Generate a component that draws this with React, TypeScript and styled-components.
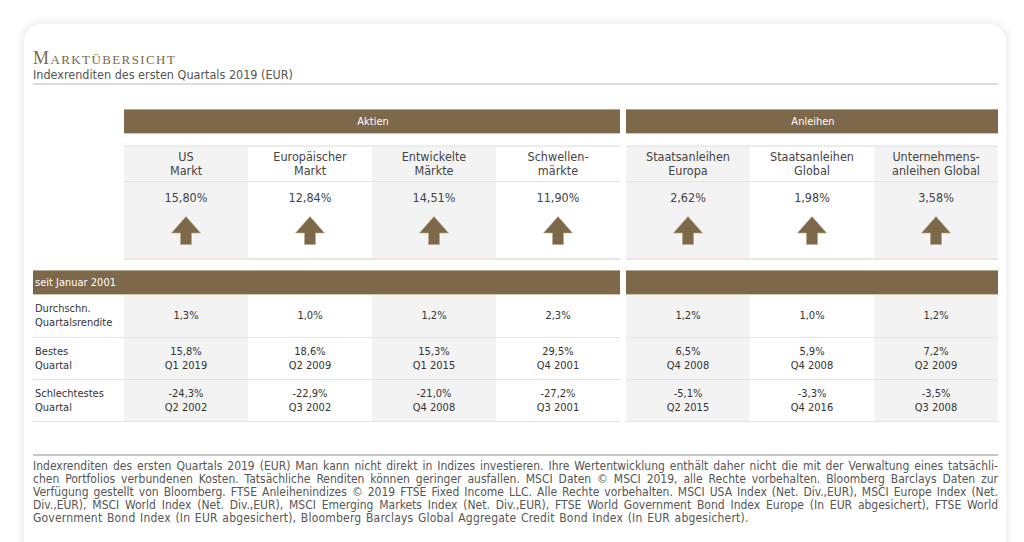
import React from "react";
import styled, { createGlobalStyle } from "styled-components";

const BROWN = "#7d6849";
const SANS = `"DejaVu Sans Condensed", "DejaVu Sans", sans-serif`;

const GlobalStyle = createGlobalStyle`
  html, body { margin: 0; padding: 0; background: #fff; }
  body { font-family: ${SANS}; color: #444; overflow: hidden; }
`;

const Page = styled.div`
  padding: 24px 18px 0 24px;
  height: 542px;
  box-sizing: border-box;
  overflow: hidden;
`;

const Card = styled.div`
  background: #fff;
  border-radius: 18px 18px 0 0;
  box-shadow: 0 0 6px 4px rgba(0, 0, 0, 0.06);
  padding: 25px 8px 0 9px;
  height: 560px;
  box-sizing: border-box;
`;

const Title = styled.h1`
  margin: 0;
  font-family: "Liberation Serif", serif;
  font-weight: normal;
  font-variant: small-caps;
  font-size: 18px;
  line-height: 18px;
  letter-spacing: 1.4px;
  color: ${BROWN};
`;

const Subtitle = styled.div`
  font-size: 12.5px;
  line-height: 15px;
  color: #555;
  padding-bottom: 1px;
  border-bottom: 2px solid #dcdcdc;
`;

const Grid = styled.div`
  display: grid;
  grid-template-columns: 91px repeat(4, 124px) 6px repeat(3, 124px);
  margin-top: 24px;
`;

const Blank = styled.div<{ $span?: number }>`
  grid-column: span ${(p) => p.$span ?? 1};
`;

const Spacer = styled.div<{ $h: number }>`
  grid-column: 1 / -1;
  height: ${(p) => p.$h}px;
`;

const GroupBar = styled.div<{ $span: number; $align?: string }>`
  grid-column: span ${(p) => p.$span};
  height: 25px;
  box-sizing: border-box;
  background: ${BROWN};
  border-top: 1px solid #b3a68f;
  border-bottom: 1px solid #cfc4b1;
  color: #fff;
  font-size: 11px;
  display: flex;
  align-items: center;
  justify-content: ${(p) => p.$align ?? "center"};
  padding-left: 2px;
`;

const HeadCell = styled.div<{ $shade: boolean }>`
  background: ${(p) => (p.$shade ? "#f3f3f3" : "#fff")};
  border-top: 2px solid #ececec;
  border-bottom: 1px solid #e3e3e3;
  height: 37px;
  box-sizing: border-box;
  display: flex;
  flex-direction: column;
  align-items: center;
  justify-content: center;
  text-align: center;
  font-size: 12.5px;
  line-height: 14px;
  color: #444;
`;

const ValueCell = styled.div<{ $shade: boolean }>`
  background: ${(p) => (p.$shade ? "#f3f3f3" : "#fff")};
  border-bottom: 2px solid #e6e6e6;
  height: 78px;
  box-sizing: border-box;
  display: flex;
  flex-direction: column;
  align-items: center;
  padding-top: 9px;
  font-size: 12.5px;
  line-height: 14px;
  color: #444;
`;

const ArrowWrap = styled.div`
  margin-top: 11px;
  width: 30px;
  height: 29px;
`;

const RowLabel = styled.div<{ $h: number }>`
  height: ${(p) => p.$h}px;
  box-sizing: border-box;
  border-bottom: 1px solid #e3e3e3;
  display: flex;
  flex-direction: column;
  justify-content: center;
  padding-left: 2px;
  font-size: 11px;
  line-height: 14px;
  color: #333;
`;

const DataCell = styled.div<{ $shade: boolean; $h: number }>`
  height: ${(p) => p.$h}px;
  box-sizing: border-box;
  background: ${(p) => (p.$shade ? "#f3f3f3" : "#fff")};
  border-bottom: 1px solid #e3e3e3;
  display: flex;
  flex-direction: column;
  align-items: center;
  justify-content: center;
  font-size: 11px;
  line-height: 14px;
  color: #333;
`;

const Footer = styled.div`
  margin-top: 32px;
  border-top: 2px solid #c8c8c8;
  padding-top: 4px;
  font-size: 12px;
  line-height: 13px;
  color: #555;
`;

const FooterLine = styled.div<{ $last?: boolean }>`
  text-align: justify;
  text-align-last: ${(p) => (p.$last ? "left" : "justify")};
  word-spacing: ${(p) => (p.$last ? "1px" : "-1px")};
  letter-spacing: ${(p) => (p.$last ? "0.2px" : "0")};
  white-space: nowrap;
`;

type Col = {
  name: [string, string];
  ret: string;
  avg: string;
  best: [string, string];
  worst: [string, string];
};

const stocks: Col[] = [
  { name: ["US", "Markt"], ret: "15,80%", avg: "1,3%", best: ["15,8%", "Q1 2019"], worst: ["-24,3%", "Q2 2002"] },
  { name: ["Europäischer", "Markt"], ret: "12,84%", avg: "1,0%", best: ["18,6%", "Q2 2009"], worst: ["-22,9%", "Q3 2002"] },
  { name: ["Entwickelte", "Märkte"], ret: "14,51%", avg: "1,2%", best: ["15,3%", "Q1 2015"], worst: ["-21,0%", "Q4 2008"] },
  { name: ["Schwellen-", "märkte"], ret: "11,90%", avg: "2,3%", best: ["29,5%", "Q4 2001"], worst: ["-27,2%", "Q3 2001"] },
];

const bonds: Col[] = [
  { name: ["Staatsanleihen", "Europa"], ret: "2,62%", avg: "1,2%", best: ["6,5%", "Q4 2008"], worst: ["-5,1%", "Q2 2015"] },
  { name: ["Staatsanleihen", "Global"], ret: "1,98%", avg: "1,0%", best: ["5,9%", "Q4 2008"], worst: ["-3,3%", "Q4 2016"] },
  { name: ["Unternehmens-", "anleihen Global"], ret: "3,58%", avg: "1,2%", best: ["7,2%", "Q2 2009"], worst: ["-3,5%", "Q3 2008"] },
];

const Arrow = () => (
  <ArrowWrap>
    <svg width="30" height="29" viewBox="0 0 30 29">
      <polygon
        points="15,0.5 29.5,17 20.5,17 20.5,28.5 9.5,28.5 9.5,17 0.5,17"
        fill={BROWN}
        stroke="#b8aa90"
        strokeWidth="0.6"
      />
    </svg>
  </ArrowWrap>
);

const shadeOf = (i: number) => i % 2 === 0;

const rows: { label: [string, string]; h: number; get: (c: Col) => string[] }[] = [
  { label: ["Durchschn.", "Quartalsrendite"], h: 43, get: (c) => [c.avg] },
  { label: ["Bestes", "Quartal"], h: 42, get: (c) => c.best },
  { label: ["Schlechtestes", "Quartal"], h: 42, get: (c) => c.worst },
];

const footerLines = [
  "Indexrenditen des ersten Quartals 2019 (EUR) Man kann nicht direkt in Indizes investieren. Ihre Wertentwicklung enthält daher nicht die mit der Verwaltung eines tatsächli-",
  "chen Portfolios verbundenen Kosten. Tatsächliche Renditen können geringer ausfallen. MSCI Daten © MSCI 2019, alle Rechte vorbehalten. Bloomberg Barclays Daten zur",
  "Verfügung gestellt von Bloomberg. FTSE Anleihenindizes © 2019 FTSE Fixed Income LLC. Alle Rechte vorbehalten. MSCI USA Index (Net. Div.,EUR), MSCI Europe Index (Net.",
  "Div.,EUR), MSCI World Index (Net. Div.,EUR), MSCI Emerging Markets Index (Net. Div.,EUR), FTSE World Government Bond Index Europe (In EUR abgesichert), FTSE World",
  "Government Bond Index (In EUR abgesichert), Bloomberg Barclays Global Aggregate Credit Bond Index (In EUR abgesichert).",
];

export default function App() {
  return (
    <>
      <GlobalStyle />
      <Page>
        <Card>
          <Title>Marktübersicht</Title>
          <Subtitle>Indexrenditen des ersten Quartals 2019 (EUR)</Subtitle>

          <Grid>
            <Blank />
            <GroupBar $span={4}>Aktien</GroupBar>
            <Blank />
            <GroupBar $span={3}>Anleihen</GroupBar>

            <Spacer $h={11} />

            <Blank />
            {stocks.map((c, i) => (
              <HeadCell key={"hs" + i} $shade={shadeOf(i)}>
                <span>{c.name[0]}</span>
                <span>{c.name[1]}</span>
              </HeadCell>
            ))}
            <Blank />
            {bonds.map((c, i) => (
              <HeadCell key={"hb" + i} $shade={shadeOf(i)}>
                <span>{c.name[0]}</span>
                <span>{c.name[1]}</span>
              </HeadCell>
            ))}

            <Blank />
            {stocks.map((c, i) => (
              <ValueCell key={"vs" + i} $shade={shadeOf(i)}>
                <span>{c.ret}</span>
                <Arrow />
              </ValueCell>
            ))}
            <Blank />
            {bonds.map((c, i) => (
              <ValueCell key={"vb" + i} $shade={shadeOf(i)}>
                <span>{c.ret}</span>
                <Arrow />
              </ValueCell>
            ))}

            <Spacer $h={10} />

            <GroupBar $span={5} $align="flex-start">seit Januar 2001</GroupBar>
            <Blank />
            <GroupBar $span={3} />

            {rows.map((r, ri) => (
              <React.Fragment key={"r" + ri}>
                <RowLabel $h={r.h}>
                  <span>{r.label[0]}</span>
                  <span>{r.label[1]}</span>
                </RowLabel>
                {stocks.map((c, i) => (
                  <DataCell key={"ds" + i} $h={r.h} $shade={shadeOf(i)}>
                    {r.get(c).map((t, k) => (
                      <span key={k}>{t}</span>
                    ))}
                  </DataCell>
                ))}
                <Blank />
                {bonds.map((c, i) => (
                  <DataCell key={"db" + i} $h={r.h} $shade={shadeOf(i)}>
                    {r.get(c).map((t, k) => (
                      <span key={k}>{t}</span>
                    ))}
                  </DataCell>
                ))}
              </React.Fragment>
            ))}
          </Grid>

          <Footer>
            {footerLines.map((l, i) => (
              <FooterLine key={i} $last={i === footerLines.length - 1}>
                {l}
              </FooterLine>
            ))}
          </Footer>
        </Card>
      </Page>
    </>
  );
}
